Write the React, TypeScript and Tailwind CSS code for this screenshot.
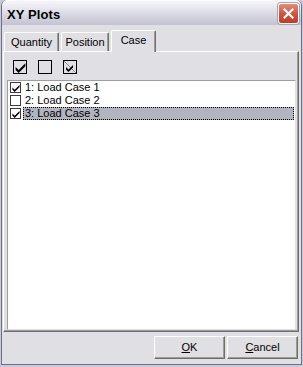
import React, { useState } from 'react';

type Item = { id: number; label: string; checked: boolean };

const initialItems: Item[] = [
  { id: 1, label: '1: Load Case 1', checked: true },
  { id: 2, label: '2: Load Case 2', checked: false },
  { id: 3, label: '3: Load Case 3', checked: true },
];

function CheckMark({ className = '' }: { className?: string }) {
  return (
    <svg viewBox="0 0 9 9" className={className}>
      <path d="M0.5 4 L3 6.5 L8.5 1 L8.5 3.5 L3 9 L0.5 6.5 Z" fill="#000" />
    </svg>
  );
}

export default function App() {
  const [tab, setTab] = useState('Case');
  const [items, setItems] = useState<Item[]>(initialItems);
  const [selected, setSelected] = useState(3);

  const toggle = (id: number) =>
    setItems(prev => prev.map(i => (i.id === id ? { ...i, checked: !i.checked } : i)));

  const tabs = [
    { name: 'Quantity', w: 'w-[55px]' },
    { name: 'Position', w: 'w-[48px]' },
    { name: 'Case', w: 'w-[45px]' },
  ];

  return (
    <div
      className="w-[303px] h-[367px] bg-[#c9c9d8] px-px pb-[2px] flex text-[11px] text-black"
      style={{ fontFamily: '"Liberation Sans", Arial, sans-serif' }}
    >
      <div className="flex-1 flex flex-col border-x border-b border-[#6e6e88] rounded-t-[6px] overflow-hidden">
        {/* Title bar */}
        <div className="h-[25px] flex items-start justify-between bg-gradient-to-b from-[#f6f6fa] via-[#dcdce6] to-[#c2c2d2] border-t border-[#fafafe]">
          <span className="pl-[5px] pt-[7px] text-[13px] font-bold leading-none tracking-[0.1px]">XY Plots</span>
          <button className="mt-[2px] mr-[2px] w-[21px] h-[21px] rounded-[3px] border border-white bg-gradient-to-b from-[#e68a78] via-[#d2563f] to-[#bf3b28] flex items-center justify-center shadow-[0_0_0_1px_#a5a5b8]">
            <svg viewBox="0 0 11 11" className="w-[11px] h-[11px]">
              <path d="M1.5 1.5 L9.5 9.5 M9.5 1.5 L1.5 9.5" stroke="#fff" strokeWidth="2.2" strokeLinecap="square" />
            </svg>
          </button>
        </div>

        {/* Body */}
        <div className="flex-1 bg-[#e0dfe3] flex flex-col pl-px pr-[2px]">
          {/* Tabs */}
          <div className="mt-[5px] h-[21px] flex items-end pl-px relative z-10">
            {tabs.map(t => {
              const active = tab === t.name;
              return (
                <button
                  key={t.name}
                  onClick={() => setTab(t.name)}
                  className={`${t.w} ${
                    active ? 'h-[22px] -mb-px pb-[3px]' : 'h-[19px] mr-[2px]'
                  } bg-[#e0dfe3] border-t border-l border-white border-r border-r-[#716f64] shadow-[inset_-1px_0_0_#9d9da1] rounded-t-[2px] flex items-center justify-center leading-none`}
                >
                  {t.name}
                </button>
              );
            })}
          </div>

          {/* Panel */}
          <div className="h-[281px] flex flex-col border-t border-l border-white border-r border-b border-r-[#716f64] border-b-[#716f64] shadow-[inset_-1px_-1px_0_#9d9da1] pl-[3px] pr-[2px] pb-px">
            <div className="pt-[8px] pl-[6px] flex gap-[11px]">
              <button className="w-[14px] h-[14px] border border-black flex items-center justify-center">
                <CheckMark className="w-[11px] h-[11px]" />
              </button>
              <button className="w-[14px] h-[14px] border border-black" />
              <button className="w-[14px] h-[14px] border border-black relative overflow-hidden">
                <svg viewBox="0 0 12 12" className="absolute inset-0 w-[12px] h-[12px]">
                  <path d="M0 0 L12 12" stroke="#8a8a8a" strokeWidth="1" />
                  <path d="M2 6 L4.5 8.5 L9 4 L9 6.5 L4.5 11 L2 8.5 Z" fill="#000" />
                </svg>
              </button>
            </div>

            <div className="mt-[6px] flex-1 bg-white border border-t-[#9d9da1] border-l-[#9d9da1] border-b-[#e0dfe3] border-r-[#e0dfe3]">
              {items.map(item => {
                const sel = selected === item.id;
                return (
                  <div key={item.id} className="h-[13px] flex items-center" onClick={() => setSelected(item.id)}>
                    <span
                      onClick={() => toggle(item.id)}
                      className="ml-[2px] w-[11px] h-[11px] border border-[#3c3c3c] bg-white flex items-center justify-center shrink-0"
                    >
                      {item.checked && <CheckMark className="w-[8px] h-[8px]" />}
                    </span>
                    <span
                      className={`ml-[2px] flex-1 h-[13px] pl-px leading-[11px] ${
                        sel ? 'bg-[#b2b4bf] border border-dotted border-black mr-px' : 'border border-transparent'
                      }`}
                    >
                      {item.label}
                    </span>
                  </div>
                );
              })}
            </div>
          </div>

          {/* Buttons */}
          <div className="mt-[4px] flex justify-end gap-[2px] pr-px">
            <button className="w-[71px] h-[23px] bg-[#e0dfe3] border-t border-l border-white border-r border-b border-r-[#716f64] border-b-[#716f64] shadow-[inset_-1px_-1px_0_#9d9da1] flex items-center justify-center leading-none">
              <span><span className="underline">O</span>K</span>
            </button>
            <button className="w-[71px] h-[23px] bg-[#e0dfe3] border-t border-l border-white border-r border-b border-r-[#716f64] border-b-[#716f64] shadow-[inset_-1px_-1px_0_#9d9da1] flex items-center justify-center leading-none">
              <span><span className="underline">C</span>ancel</span>
            </button>
          </div>
        </div>
      </div>
    </div>
  );
}
